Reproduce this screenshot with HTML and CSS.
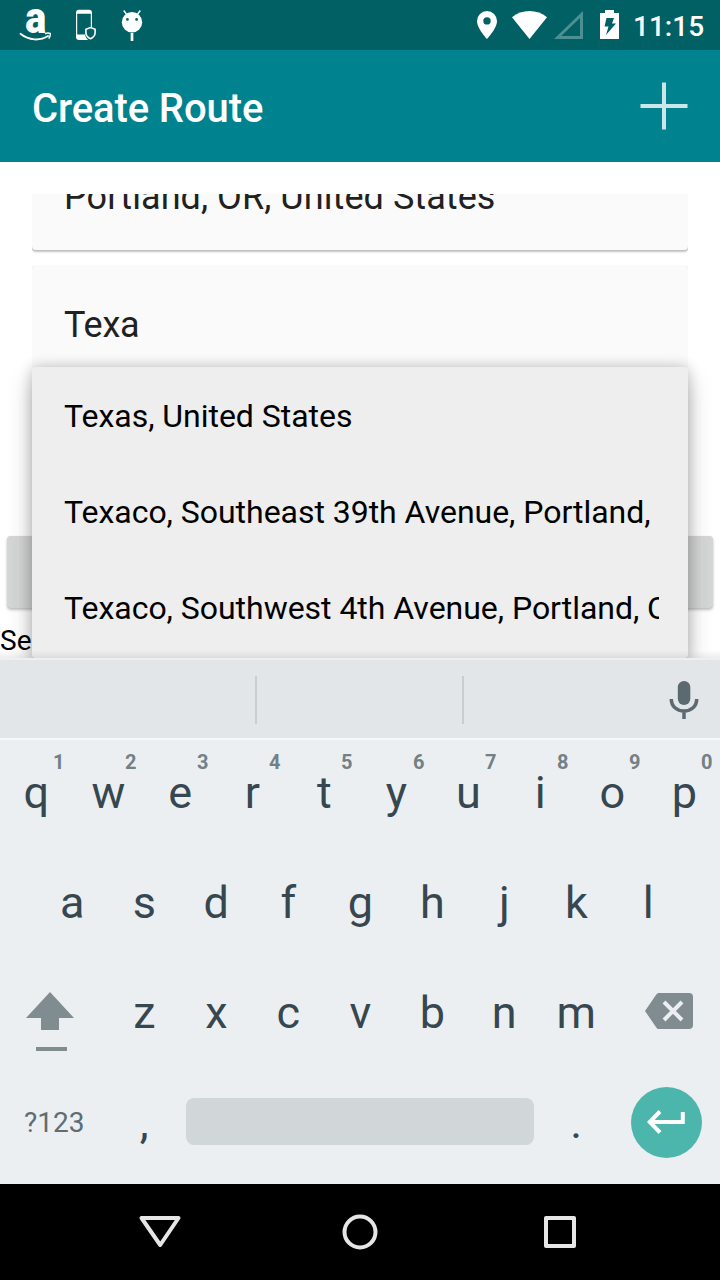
FILE: index.html
```html
<!DOCTYPE html>
<html lang="en">
<head>
<meta charset="utf-8">
<title>Create Route</title>
<link rel="stylesheet" href="styles.css">
</head>
<body>
<div class="screen">
  <header class="status">
    <div class="status-group">
      <div class="notif amazon"><span>a</span>
        <svg class="smile" width="34" height="10" viewBox="0 0 34 10"><path d="M1.500 1.800C10 8.800 21 9 29 4" fill="none" stroke="#fff" stroke-width="1.900" stroke-linecap="round"/><path d="M26 1.800c2-1 4-.8 5.300-.3.2 1.800-.5 3.600-1.600 5.200" fill="none" stroke="#fff" stroke-width="1.400"/></svg>
      </div>
      <svg class="notif" viewBox="0 0 48 50"><path d="M19 9.700h10a3 3 0 0 1 3 3v15l-1.200-1V13.800H17.200V34.500H25c.5 2.300 1.400 4 3 5.200-.5.300-1 .3-1.500.3H19a3 3 0 0 1-3-3V12.700a3 3 0 0 1 3-3z" fill="#fff"/><path d="M30.500 27.500l4.600 1.700v3.300c0 3-1.600 4.900-4.600 6.200-3-1.300-4.600-3.200-4.600-6.200v-3.300z" fill="#006064" stroke="#fff" stroke-width="1.600"/></svg>
      <svg class="notif" viewBox="0 0 48 50"><circle cx="24" cy="22.300" r="10.200" fill="#fff"/><path d="M18.700 14.500l-3-4M29.300 14.500l3-4" stroke="#fff" stroke-width="1.500"/><circle cx="19.400" cy="19.400" r="1.400" fill="#006064"/><circle cx="28.600" cy="19.400" r="1.400" fill="#006064"/><path d="M24 33v8" stroke="#fff" stroke-width="2.700"/></svg>
    </div>
    <div class="status-group right">
      <svg width="20" height="28" viewBox="0 0 20 28"><path fill-rule="evenodd" d="M10 0a10 10 0 0 0-10 10c0 7.500 10 18 10 18s10-10.500 10-18A10 10 0 0 0 10 0zm0 6.200a3.700 3.700 0 1 1 0 7.400 3.700 3.700 0 0 1 0-7.400z" fill="#fff"/></svg>
      <svg class="wifi" width="35" height="28" viewBox="0 0 35 28"><path d="M17.500 28L0 6.200C9.500-2 25.500-2 35 6.200z" fill="#fff"/></svg>
      <svg class="signal" width="29" height="28" viewBox="0 0 29 28"><path fill-rule="evenodd" d="M29 0v28H0zM26 7L7.200 25H26z" fill="#4d9093"/></svg>
      <svg class="battery" width="19" height="29" viewBox="0 0 19 29"><path d="M5 0h9v3h5v26H0V3h5z" fill="#fff"/><path d="M6.500 8H14l-2 5.500h4L6 25l2.500-8.500h-4z" fill="#006064"/></svg>
      <span class="clock">11:15</span>
    </div>
  </header>
  <div class="appbar">
    <h1>Create Route</h1>
    <svg width="48" height="48" viewBox="0 0 48 48"><path d="M24 .5v47M.5 24h47" stroke="#cce6e9" stroke-width="4"/></svg>
  </div>
  <main class="content">
    <div class="list">
      <div class="card first"><span>Portland, OR, United States</span></div>
      <div class="card second"><span>Texa</span></div>
    </div>
    <div class="button"></div>
    <div class="caption">Se</div>
    <div class="popup">
      <div class="option">Texas, United States</div>
      <div class="option">Texaco, Southeast 39th Avenue, Portland,</div>
      <div class="option">Texaco, Southwest 4th Avenue, Portland, O</div>
    </div>
    <div class="edge"></div>
  </main>
  <section class="keyboard">
    <div class="suggestions">
      <div class="slot"></div><div class="slot middle"></div>
      <svg width="30" height="40" viewBox="0 0 30 40"><rect x="8.800" y="1" width="12.500" height="24" rx="6.200" fill="#5b6a71"/><path d="M2.300 19c0 7.500 5.500 12 12.700 12s12.700-4.500 12.700-12M15 30v9" fill="none" stroke="#5b6a71" stroke-width="3.500"/></svg>
    </div>
    <div class="row">
      <div class="key">q<sup>1</sup></div><div class="key">w<sup>2</sup></div><div class="key">e<sup>3</sup></div><div class="key">r<sup>4</sup></div><div class="key">t<sup>5</sup></div><div class="key">y<sup>6</sup></div><div class="key">u<sup>7</sup></div><div class="key">i<sup>8</sup></div><div class="key">o<sup>9</sup></div><div class="key">p<sup>0</sup></div>
    </div>
    <div class="row">
      <div class="key">a</div><div class="key">s</div><div class="key">d</div><div class="key">f</div><div class="key">g</div><div class="key">h</div><div class="key">j</div><div class="key">k</div><div class="key">l</div>
    </div>
    <div class="row">
      <div class="key wide shift"><svg width="48" height="60" viewBox="0 0 48 60"><path d="M24 0l24 26H33v12H15V26H0z" fill="#808c90"/><path d="M10 57h31" stroke="#808c90" stroke-width="4"/></svg></div>
      <div class="key">z</div><div class="key">x</div><div class="key">c</div><div class="key">v</div><div class="key">b</div><div class="key">n</div><div class="key">m</div>
      <div class="key wide delete"><svg width="48" height="36" viewBox="0 0 48 36"><path d="M14 0h30a4 4 0 0 1 4 4v28a4 4 0 0 1-4 4H14c-1.200 0-2-.6-2.700-1.600L0 18 11.300 1.600C12 .6 12.800 0 14 0z" fill="#808c90"/><path d="M19 9l18 18M37 9L19 27" stroke="#ebeff2" stroke-width="4"/></svg></div>
    </div>
    <div class="row">
      <div class="key wide symbols">?123</div>
      <div class="key">,</div>
      <div class="key space"><div class="bar"></div></div>
      <div class="key">.</div>
      <div class="key wide enter"><div class="disc"><svg width="38" height="24" viewBox="0 0 38 24"><path d="M35.800 2v10H3M13 1.500L2.700 12 13 22.500" fill="none" stroke="#fff" stroke-width="4"/></svg></div></div>
    </div>
  </section>
  <nav class="nav">
    <svg width="48" height="48" viewBox="0 0 48 48"><path d="M5.500 10h37L24.200 37z" fill="none" stroke="#e6e6e6" stroke-width="4" stroke-linejoin="round"/></svg>
    <svg width="48" height="48" viewBox="0 0 48 48"><circle cx="24" cy="24" r="15.500" fill="none" stroke="#e6e6e6" stroke-width="4"/></svg>
    <svg width="48" height="48" viewBox="0 0 48 48"><rect x="10" y="10" width="28" height="28" fill="none" stroke="#e6e6e6" stroke-width="4" stroke-linejoin="round"/></svg>
  </nav>
</div>
</body>
</html>
```
FILE: styles.css
```css
* { box-sizing: border-box; }
body { margin: 0; font-family: Roboto, "Liberation Sans", sans-serif; }
svg { display: block; flex: none; }
.screen { width: 720px; height: 1280px; overflow: hidden; display: flex; flex-direction: column; background: #fff; }

.status { height: 50px; flex: none; background: #006064; display: flex; justify-content: space-between; padding: 0 16px 0 12px; }
.status-group { display: flex; }
.notif { width: 48px; height: 50px; }
.amazon { color: #fff; position: relative; text-align: center; font-size: 44px; font-weight: 900; line-height: 37px; }
.amazon span { display: inline-block; transform: scaleX(.9); }
.smile { position: absolute; left: 7px; top: 32px; }
.right { align-items: flex-start; padding-top: 11px; }
.wifi { margin-left: 15px; }
.signal { margin-left: 7px; }
.battery { margin: -1px 0 0 17px; }
.clock { color: #fff; font-size: 28px; font-weight: 500; line-height: 31px; margin-left: 14px; width: 71px; white-space: nowrap; }

.appbar { height: 112px; flex: none; background: #00838f; display: flex; align-items: center; justify-content: space-between; padding: 0 32px; }
.appbar h1 { margin: 6px 0 0; color: #fff; font-size: 40px; line-height: 48px; font-weight: 500; letter-spacing: -.1px; }

.content { height: 496px; flex: none; position: relative; overflow: hidden; padding-top: 32px; }
.list { height: 342px; overflow: hidden; margin: 0 32px; display: flex; flex-direction: column; gap: 16px; }
.card { background: #fafafa; color: #212121; font-size: 36px; flex: none; box-shadow: 0 2px 2px rgba(0,0,0,.24), 0 0 1px rgba(0,0,0,.2); padding-left: 32px; }
.card span { display: block; white-space: nowrap; line-height: 42px; }
.first { height: 56px; border-radius: 0 0 4px 4px; display: flex; }
.first span { margin-top: -18px; letter-spacing: .07px; }
.second { height: 180px; border-radius: 4px 4px 0 0; padding-top: 38px; letter-spacing: -.2px; }
.button { height: 72px; margin: 0 7px; border-radius: 4px; background: #d5d7d6; box-shadow: 0 2px 3px rgba(0,0,0,.24), 0 0 1px rgba(0,0,0,.15); }
.caption { color: #000; font-size: 28px; line-height: 33px; margin-top: 16px; }
.popup { position: absolute; left: 32px; top: 205px; width: 656px; height: 291px; background: #eee; border-radius: 4px; padding: 0 29px 0 32px; box-shadow: 0 12px 24px rgba(0,0,0,.24), 0 0 14px rgba(0,0,0,.2); }
.option { height: 96px; line-height: 98px; font-size: 32px; color: #000; white-space: nowrap; overflow: hidden; letter-spacing: -.03px; }
.edge { position: absolute; left: 0; bottom: 0; width: 100%; height: 8px; background: linear-gradient(rgba(0,0,0,0), rgba(0,0,0,.07)); }

.keyboard { height: 526px; flex: none; background: #ebeff2; }
.suggestions { height: 82px; background: #e2e6e9; border-top: 2px solid #eeefef; border-bottom: 2px solid #f6f8f9; padding-top: 2px; display: flex; align-items: center; }
.slot { width: 257px; height: 48px; border-right: 2px solid #c8cdd0; }
.middle { width: 207px; }
.suggestions svg { margin: -1px 0 0 205px; }
.row { height: 110px; display: flex; justify-content: center; }
.key { width: 72px; height: 110px; flex: none; text-align: center; color: #37474f; font-size: 45px; line-height: 105px; position: relative; text-indent: .6px; }
.key sup { position: absolute; right: 7.500px; top: 10px; font-size: 20px; line-height: 24px; font-weight: 700; color: #738086; }
.wide { width: 108px; display: flex; }
.shift svg { margin: 32px 0 0 26px; }
.delete svg { margin: 33px 0 0 33px; }
.symbols { font-size: 28px; justify-content: center; color: #5f6c72; }
.space { width: 360px; padding: 28px 6px 0; }
.bar { height: 47px; border-radius: 8px; background: #d1d6d9; }
.disc { width: 71px; height: 71px; margin: 16.500px 0 0 18.500px; border-radius: 50%; background: #4db6ac; display: flex; align-items: center; justify-content: center; }

.nav { height: 96px; flex: none; background: #000; display: flex; align-items: center; justify-content: center; gap: 152px; }
```
